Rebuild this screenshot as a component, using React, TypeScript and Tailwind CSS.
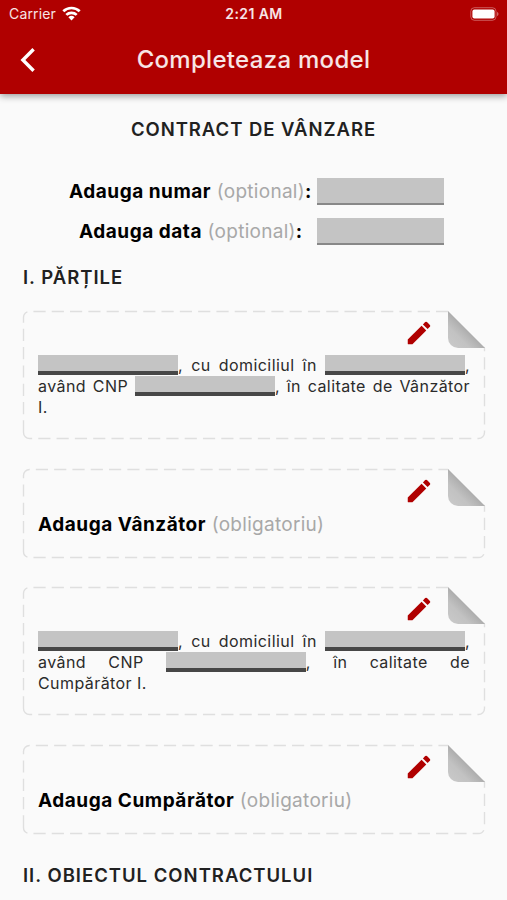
import type { ReactNode } from 'react';

const CARD_WIDTH = 462;

function StatusBar() {
  return (
    <div className="grid h-7 grid-cols-3 items-center pl-[9px] pr-[8px] text-white/90">
      <div className="flex items-center gap-1.5">
        <span className="text-[14px] leading-none tracking-[0.15px]">Carrier</span>
        <svg className="mt-[-2px]" width="19" height="15" viewBox="0 0 19 15" fill="none" stroke="white" strokeWidth="2.7">
          <path d="M1.300 5.300a11.800 11.800 0 0 1 16.400 0" />
          <path d="M4.300 8.900a7.500 7.500 0 0 1 10.400 0" />
          <path d="M9.5 14.500 6.400 11.300a4.500 4.500 0 0 1 6.200 0z" fill="white" stroke="none" />
        </svg>
      </div>
      <span className="text-center text-[14px] font-semibold leading-none tracking-[0.4px]">2:21 AM</span>
      <svg className="mt-[-1px] justify-self-end" width="29" height="14" viewBox="0 0 29 14">
        <rect x="0.8" y="0.7" width="25.200" height="12.600" rx="3.6" fill="none" stroke="white" strokeOpacity="0.35" />
        <rect x="2.400" y="2.400" width="22.200" height="9.200" rx="2" fill="white" />
        <path d="M27 5v4c.9-.3 1.500-1.100 1.500-2s-.6-1.700-1.500-2z" fill="white" fillOpacity="0.4" />
      </svg>
    </div>
  );
}

function Header() {
  return (
    <header className="h-[94px] bg-[#b00000] shadow-[0_2px_7px_rgba(0,0,0,0.4)]">
      <StatusBar />
      <div className="grid h-[64px] grid-cols-[60px_1fr_60px] items-center text-white">
        <button className="pl-5" aria-label="Inapoi">
          <svg width="16" height="24" viewBox="0 0 16 24" fill="none" stroke="currentColor" strokeWidth="3.4">
            <path d="M13.600 1.300 2.900 12l10.700 10.700" />
          </svg>
        </button>
        <h1 className="text-center text-[24px] font-medium leading-none tracking-[0.3px] text-white/90">
          Completeaza model
        </h1>
      </div>
    </header>
  );
}

function OptionalField({ label, className }: { label: string; className: string }) {
  return (
    <div className="flex h-[27px] items-center">
      <label className={className}>
        <span className="font-bold tracking-[0.52px] text-black">{label}</span>{' '}
        <span className="text-[#a8a8a8]">(optional)</span>
        <span className="font-bold text-black">:</span>
      </label>
      <div className="h-[27px] w-[127px] border-b-2 border-[#888888] bg-[#c4c4c4]" />
    </div>
  );
}

// Blank to be filled in, kept on the same line as the comma after it
function Blank() {
  return (
    <span className="whitespace-nowrap">
      <span className="inline-block h-[19.6px] w-[140px] border-b-4 border-[#474747] bg-[#c4c4c4] align-[-4px]" />,
    </span>
  );
}

function Pencil() {
  return (
    <svg className="size-[30px] text-[#b00000]" viewBox="0 0 24 24" fill="currentColor">
      <path d="M3 17.250V20.500q0 .5.5.5h3.250L17.810 9.940l-3.750-3.750z" />
      <path d="M20.710 7.040a1 1 0 0 0 0-1.410l-2.340-2.340a1 1 0 0 0-1.410 0l-1.830 1.830 3.750 3.750z" />
    </svg>
  );
}

function Card({ height, id, children }: { height: number; id: string; children: ReactNode }) {
  const r = 6;
  const right = CARD_WIDTH - 0.5;
  const bottom = height - 0.5;
  const outline = [
    `M0.5 ${bottom - r}V${0.5 + r}`,
    `A${r} ${r} 0 0 1 ${0.5 + r} 0.5`,
    `H${right - r}`,
    `A${r} ${r} 0 0 1 ${right} ${0.5 + r}`,
    `V${bottom - r}`,
    `A${r} ${r} 0 0 1 ${right - r} ${bottom}`,
    `H${0.5 + r}`,
    `A${r} ${r} 0 0 1 0.5 ${bottom - r}`,
  ].join('');

  return (
    <section className="relative w-[462px] px-[15px]" style={{ height }}>
      <svg className="pointer-events-none absolute inset-0 overflow-visible" width={CARD_WIDTH} height={height}>
        <defs>
          <linearGradient id={id} x1="0" y1="1" x2="0.5" y2="0.5">
            <stop offset="0" stopColor="#cacaca" />
            <stop offset="0.6" stopColor="#c2c2c2" />
            <stop offset="1" stopColor="#adadad" />
          </linearGradient>
        </defs>
        <path d={outline} fill="none" stroke="#dfdfdf" strokeWidth="1.4" strokeDasharray="12.2 6.1" />
        <path d="M425-2h40v39.500h-2L425 0z" fill="#fafafa" />
        <path d="M425 0 462 37H435a10 10 0 0 1-10-10z" fill={`url(#${id})`} />
      </svg>
      <div className="flex h-[44px] items-center justify-end pr-[36px]">
        <Pencil />
      </div>
      {children}
    </section>
  );
}

function Clause({ children }: { children: ReactNode }) {
  return (
    <p className="text-justify text-[16px] leading-[20.8px] tracking-[0.42px] text-[#2b2b2b]">{children}</p>
  );
}

function AddParty({ label }: { label: string }) {
  return (
    <p className="text-[19px] leading-6 tracking-[0.28px]">
      <span className="font-bold tracking-[0.53px] text-black">{label}</span>{' '}
      <span className="text-[#a8a8a8]">(obligatoriu)</span>
    </p>
  );
}

export default function App() {
  return (
    <div className="h-[900px] w-[507px] overflow-hidden bg-[#fafafa] font-['Inter',sans-serif]">
      <Header />
      <main className="px-[23px]">
        <h2 className="mt-[23px] text-center text-[18.5px] font-semibold leading-6 tracking-[0.96px] text-[#212121]">
          CONTRACT DE VÂNZARE
        </h2>

        <div className="mt-[37px] flex flex-col gap-[13px] text-[19px] leading-6 tracking-[0.28px]">
          <OptionalField label="Adauga numar" className="w-[294px] whitespace-nowrap pl-[46px]" />
          <OptionalField label="Adauga data" className="w-[294px] whitespace-nowrap pl-[56px]" />
        </div>

        <h3 className="mt-5 text-[18.5px] font-semibold leading-6 tracking-[1px] text-[#212121]">I. PĂRȚILE</h3>

        <div className="mt-[22px] flex flex-col gap-[29.5px]">
          <Card id="fold-seller" height={128}>
            <Clause>
              <Blank /> cu domiciliul în <Blank /> având CNP <Blank /> în calitate de Vânzător I.
            </Clause>
          </Card>
          <Card id="fold-add-seller" height={89}>
            <AddParty label="Adauga Vânzător" />
          </Card>
          <Card id="fold-buyer" height={128}>
            <Clause>
              <Blank /> cu domiciliul în <Blank /> având CNP <Blank /> în calitate de Cumpărător I.
            </Clause>
          </Card>
          <Card id="fold-add-buyer" height={89}>
            <AddParty label="Adauga Cumpărător" />
          </Card>
        </div>

        <h3 className="mt-[29px] text-[18.5px] font-semibold leading-6 tracking-[1px] text-[#212121]">
          II. OBIECTUL CONTRACTULUI
        </h3>
      </main>
    </div>
  );
}
